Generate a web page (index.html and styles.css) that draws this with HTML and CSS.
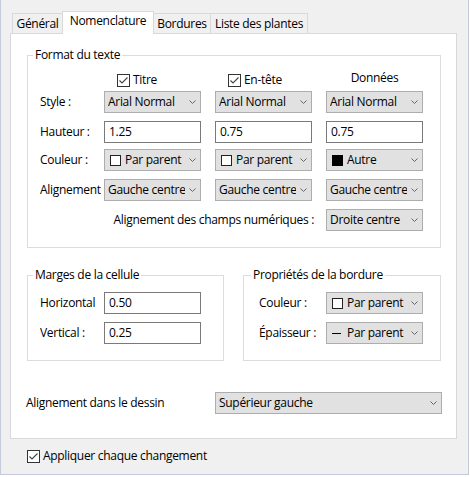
FILE: index.html
```html
<!DOCTYPE html>
<html lang="fr">
<head>
<meta charset="utf-8">
<title>Nomenclature</title>
<link rel="stylesheet" href="styles.css">
</head>
<body>
<div class="window">
  <div class="tabs">
    <div class="tab t-gen">Général</div>
    <div class="tab t-nom active">Nomenclature</div>
    <div class="tab t-bor">Bordures</div>
    <div class="tab t-lis">Liste des plantes</div>
  </div>
  <div class="panel">
    <div class="group g-format">
      <div class="group-title">Format du texte</div>
      <div class="row row-check">
        <div class="lbl"></div>
        <div class="col chk-col"><span class="cb"><svg width="13" height="13" viewBox="0 0 13 13"><rect x="0.5" y="0.5" width="12" height="12" fill="#fff" stroke="#333"/><polyline points="2.5,6.5 5,9 10.5,3.5" fill="none" stroke="#444" stroke-width="1.1"/></svg></span>Titre</div>
        <div class="col chk-col"><span class="cb"><svg width="13" height="13" viewBox="0 0 13 13"><rect x="0.5" y="0.5" width="12" height="12" fill="#fff" stroke="#333"/><polyline points="2.5,6.5 5,9 10.5,3.5" fill="none" stroke="#444" stroke-width="1.1"/></svg></span>En-tête</div>
        <div class="col head-col">Données</div>
      </div>
      <div class="row r-style">
        <div class="lbl">Style :</div>
        <div class="combo"><span class="val">Arial Normal</span><svg class="chev" width="7" height="4" viewBox="0 0 7 4"><polyline points="0.5,0.5 3.5,3.5 6.5,0.5" fill="none" stroke="#666"/></svg></div>
        <div class="combo"><span class="val">Arial Normal</span><svg class="chev" width="7" height="4" viewBox="0 0 7 4"><polyline points="0.5,0.5 3.5,3.5 6.5,0.5" fill="none" stroke="#666"/></svg></div>
        <div class="combo"><span class="val">Arial Normal</span><svg class="chev" width="7" height="4" viewBox="0 0 7 4"><polyline points="0.5,0.5 3.5,3.5 6.5,0.5" fill="none" stroke="#666"/></svg></div>
      </div>
      <div class="row r-haut">
        <div class="lbl">Hauteur :</div>
        <div class="field">1.25</div>
        <div class="field">0.75</div>
        <div class="field">0.75</div>
      </div>
      <div class="row r-coul">
        <div class="lbl">Couleur :</div>
        <div class="combo"><span class="val"><span class="sw"></span>Par parent</span><svg class="chev" width="7" height="4" viewBox="0 0 7 4"><polyline points="0.5,0.5 3.5,3.5 6.5,0.5" fill="none" stroke="#666"/></svg></div>
        <div class="combo"><span class="val"><span class="sw"></span>Par parent</span><svg class="chev" width="7" height="4" viewBox="0 0 7 4"><polyline points="0.5,0.5 3.5,3.5 6.5,0.5" fill="none" stroke="#666"/></svg></div>
        <div class="combo"><span class="val"><span class="sw sw-black"></span>Autre</span><svg class="chev" width="7" height="4" viewBox="0 0 7 4"><polyline points="0.5,0.5 3.5,3.5 6.5,0.5" fill="none" stroke="#666"/></svg></div>
      </div>
      <div class="row r-align">
        <div class="lbl">Alignement</div>
        <div class="combo"><span class="val">Gauche centre</span><svg class="chev" width="7" height="4" viewBox="0 0 7 4"><polyline points="0.5,0.5 3.5,3.5 6.5,0.5" fill="none" stroke="#666"/></svg></div>
        <div class="combo"><span class="val">Gauche centre</span><svg class="chev" width="7" height="4" viewBox="0 0 7 4"><polyline points="0.5,0.5 3.5,3.5 6.5,0.5" fill="none" stroke="#666"/></svg></div>
        <div class="combo"><span class="val">Gauche centre</span><svg class="chev" width="7" height="4" viewBox="0 0 7 4"><polyline points="0.5,0.5 3.5,3.5 6.5,0.5" fill="none" stroke="#666"/></svg></div>
      </div>
      <div class="row r-num">
        <div class="numlabel">Alignement des champs numériques :</div>
        <div class="combo"><span class="val">Droite centre</span><svg class="chev" width="7" height="4" viewBox="0 0 7 4"><polyline points="0.5,0.5 3.5,3.5 6.5,0.5" fill="none" stroke="#666"/></svg></div>
      </div>
    </div>

    <div class="pair">
      <div class="group g-marges">
        <div class="group-title">Marges de la cellule</div>
        <div class="row r-first">
          <div class="lbl">Horizontal</div>
          <div class="field">0.50</div>
        </div>
        <div class="row r-second">
          <div class="lbl">Vertical :</div>
          <div class="field">0.25</div>
        </div>
      </div>
      <div class="group g-bord">
        <div class="group-title">Propriétés de la bordure</div>
        <div class="row r-first">
          <div class="lbl lbl-wide">Couleur :</div>
          <div class="combo"><span class="val"><span class="sw"></span>Par parent</span><svg class="chev" width="7" height="4" viewBox="0 0 7 4"><polyline points="0.5,0.5 3.5,3.5 6.5,0.5" fill="none" stroke="#666"/></svg></div>
        </div>
        <div class="row r-second">
          <div class="lbl lbl-wide">Épaisseur :</div>
          <div class="combo"><span class="val"><span class="dash"></span>Par parent</span><svg class="chev" width="7" height="4" viewBox="0 0 7 4"><polyline points="0.5,0.5 3.5,3.5 6.5,0.5" fill="none" stroke="#666"/></svg></div>
        </div>
      </div>
    </div>

    <div class="row r-dessin">
      <div class="dlabel">Alignement dans le dessin</div>
      <div class="combo combo-wide"><span class="val">Supérieur gauche</span><svg class="chev" width="7" height="4" viewBox="0 0 7 4"><polyline points="0.5,0.5 3.5,3.5 6.5,0.5" fill="none" stroke="#666"/></svg></div>
    </div>
  </div>
  <div class="apply"><span class="cb"><svg width="13" height="13" viewBox="0 0 13 13"><rect x="0.5" y="0.5" width="12" height="12" fill="#fff" stroke="#333"/><polyline points="2.5,6.5 5,9 10.5,3.5" fill="none" stroke="#444" stroke-width="1.1"/></svg></span>Appliquer chaque changement</div>
</div>
</body>
</html>
```

FILE: styles.css
```css
html, body {
  margin: 0;
  padding: 0;
  background: #ffffff;
}

body {
  font-family: "Open Sans", "Noto Sans", "DejaVu Sans", sans-serif;
  font-size: 12px;
  line-height: 16px;
  letter-spacing: -0.3px;
  color: #000;
}

.window {
  width: 469px;
  height: 475px;
  box-sizing: border-box;
  background: #f0f0f0;
  border: 1px solid #c3cbdb;
  border-top: none;
  padding: 11px 0 0 9px;
}

/* Tabs */
.tabs {
  display: flex;
  align-items: flex-end;
  height: 22px;
  margin-left: 2px;
}

.tab {
  height: 20px;
  box-sizing: border-box;
  border: 1px solid #d9d9d9;
  border-bottom: none;
  background: #f0f0f0;
  text-align: center;
  line-height: 20px;
  margin-left: -1px;
  white-space: nowrap;
}

.t-gen { width: 51px; margin-left: 0; }
.t-nom { width: 92px; }
.t-bor { width: 58px; }
.t-lis { width: 98px; }

.tab.active {
  height: 23px;
  background: #fff;
  margin-bottom: -1px;
  line-height: 18px;
  position: relative;
  z-index: 1;
}

/* Panel */
.panel {
  width: 447px;
  height: 406px;
  box-sizing: border-box;
  background: #fff;
  border: 1px solid #d9d9d9;
  padding: 21px 0 0 16px;
}

.group {
  border: 1px solid #dcdcdc;
  box-sizing: border-box;
  padding-left: 12px;
}

.group-title {
  display: table;
  margin: -9px 0 0 -7px;
  padding: 0 2px;
  background: #fff;
  white-space: nowrap;
}

.g-bord .group-title {
  margin-left: -8px;
}

.g-format {
  width: 414px;
  padding-bottom: 16px;
}

.row {
  display: flex;
  align-items: center;
}

.lbl {
  width: 61px;
  margin-right: 3px;
  overflow: hidden;
  white-space: nowrap;
  flex: none;
}

.col {
  width: 97px;
  flex: none;
  margin-right: 14px;
  white-space: nowrap;
  display: flex;
  align-items: center;
}

.row-check {
  height: 16px;
  margin-top: 9px;
}

.chk-col {
  padding-left: 13px;
  box-sizing: border-box;
}

.head-col {
  justify-content: center;
  margin-right: 0;
  position: relative;
  top: -2px;
}

.cb {
  display: inline-flex;
  width: 13px;
  height: 13px;
  margin-right: 3px;
  flex: none;
}

.cb svg { display: block; }

.combo {
  width: 97px;
  height: 22px;
  box-sizing: border-box;
  flex: none;
  display: flex;
  align-items: center;
  border: 1px solid #adadad;
  background: #e1e1e1;
  padding-left: 3px;
}

.row > .combo + .combo,
.row > .field + .field {
  margin-left: 14px;
}

.val {
  flex: 1;
  min-width: 0;
  overflow: hidden;
  white-space: nowrap;
  display: flex;
  align-items: center;
}

.chev {
  flex: none;
  display: block;
  margin: 0 4px 0 4px;
}

.field {
  width: 97px;
  height: 22px;
  box-sizing: border-box;
  flex: none;
  display: flex;
  align-items: center;
  border: 1px solid #7a7a7a;
  background: #fff;
  padding-left: 4px;
}

.sw {
  width: 11px;
  height: 11px;
  box-sizing: border-box;
  border: 1px solid #222;
  background: #fff;
  margin: 0 4px 0 2px;
  flex: none;
}

.sw-black {
  background: #000;
  border-color: #000;
}

.dash {
  width: 9px;
  height: 1px;
  background: #000;
  margin: 1px 6px 0 2px;
  flex: none;
}

.r-style { margin-top: 3px; }
.r-haut { margin-top: 8px; }
.r-coul { margin-top: 6px; }
.r-align { margin-top: 8px; }
.r-num { margin-top: 8px; }

.numlabel {
  width: 274px;
  margin-right: 12px;
  text-align: right;
  white-space: nowrap;
  flex: none;
}

/* Lower groups */
.pair {
  display: flex;
  margin-top: 27px;
  gap: 19px;
}

.g-marges {
  width: 197px;
  padding-bottom: 16px;
}

.g-bord {
  width: 198px;
  padding-left: 15px;
  padding-bottom: 16px;
}

.lbl-wide {
  width: 64px;
}

.r-first { margin-top: 9px; }
.r-second { margin-top: 8px; }

.r-dessin {
  margin-top: 31px;
  margin-left: -1px;
}

.dlabel {
  width: 189px;
  flex: none;
  white-space: nowrap;
}

.combo-wide {
  width: 227px;
}

.apply {
  display: flex;
  align-items: center;
  margin: 9px 0 0 17px;
  height: 16px;
  white-space: nowrap;
}
```
